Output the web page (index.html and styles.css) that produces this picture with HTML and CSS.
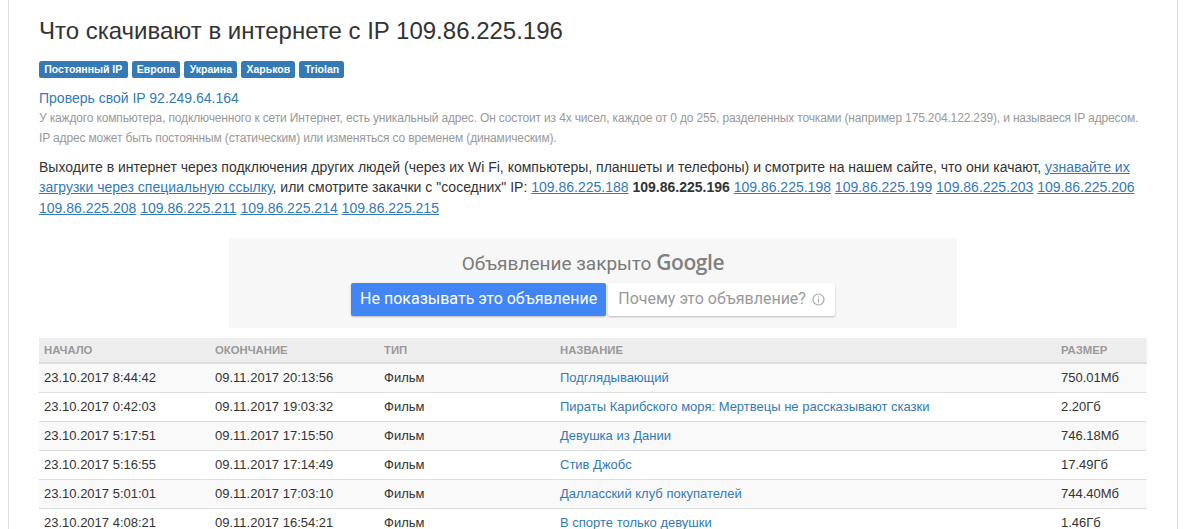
FILE: index.html
```html
<!DOCTYPE html>
<html lang="ru">
<head>
<meta charset="utf-8">
<title>Что скачивают в интернете с IP 109.86.225.196</title>
<link rel="stylesheet" href="styles.css">
</head>
<body>
<div class="page">
  <h1 class="title">Что скачивают в интернете с IP 109.86.225.196</h1>
  <div class="labels">
    <span class="label">Постоянный IP</span>
    <span class="label">Европа</span>
    <span class="label">Украина</span>
    <span class="label">Харьков</span>
    <span class="label">Triolan</span>
  </div>
  <a class="check" href="#">Проверь свой IP 92.249.64.164</a>
  <p class="note">У каждого компьютера, подключенного к сети Интернет, есть уникальный адрес. Он состоит из 4х чисел, каждое от 0 до 255, разделенных точками (например 175.204.122.239), и называеся IP адресом. IP адрес может быть постоянным (статическим) или изменяться со временем (динамическим).</p>
  <p class="lead">Выходите в интернет через подключения других людей (через их Wi Fi, компьютеры, планшеты и телефоны) и смотрите на нашем сайте, что они качают, <a href="#">узнавайте их загрузки через специальную ссылку</a>, или смотрите закачки с "соседних" IP: <a href="#">109.86.225.188</a> <b>109.86.225.196</b> <a href="#">109.86.225.198</a> <a href="#">109.86.225.199</a> <a href="#">109.86.225.203</a> <a href="#">109.86.225.206</a> <a href="#">109.86.225.208</a> <a href="#">109.86.225.211</a> <a href="#">109.86.225.214</a> <a href="#">109.86.225.215</a></p>
  <div class="ad">
    <div class="ad-title">Объявление закрыто <span class="g">Google</span></div>
    <div class="ad-buttons">
      <span class="btn-blue">Не показывать это объявление</span>
      <span class="btn-white">Почему это объявление? <svg class="info" width="13" height="13" viewBox="0 0 13 13"><circle cx="6.5" cy="6.5" r="5.5" fill="none" stroke="#aaa" stroke-width="1.2"/><rect x="5.9" y="5.5" width="1.2" height="4" fill="#aaa"/><rect x="5.9" y="3.3" width="1.2" height="1.2" fill="#aaa"/></svg></span>
    </div>
  </div>
  <table class="downloads">
    <thead>
      <tr><th class="c1">Начало</th><th class="c2">Окончание</th><th class="c3">Тип</th><th class="c4">Название</th><th class="c5">Размер</th></tr>
    </thead>
    <tbody>
      <tr><td>23.10.2017 8:44:42</td><td>09.11.2017 20:13:56</td><td>Фильм</td><td><a href="#">Подглядывающий</a></td><td>750.01Мб</td></tr>
      <tr><td>23.10.2017 0:42:03</td><td>09.11.2017 19:03:32</td><td>Фильм</td><td><a href="#">Пираты Карибского моря: Мертвецы не рассказывают сказки</a></td><td>2.20Гб</td></tr>
      <tr><td>23.10.2017 5:17:51</td><td>09.11.2017 17:15:50</td><td>Фильм</td><td><a href="#">Девушка из Дании</a></td><td>746.18Мб</td></tr>
      <tr><td>23.10.2017 5:16:55</td><td>09.11.2017 17:14:49</td><td>Фильм</td><td><a href="#">Стив Джобс</a></td><td>17.49Гб</td></tr>
      <tr><td>23.10.2017 5:01:01</td><td>09.11.2017 17:03:10</td><td>Фильм</td><td><a href="#">Далласский клуб покупателей</a></td><td>744.40Мб</td></tr>
      <tr><td>23.10.2017 4:08:21</td><td>09.11.2017 16:54:21</td><td>Фильм</td><td><a href="#">В спорте только девушки</a></td><td>1.46Гб</td></tr>
    </tbody>
  </table>
</div>
</body>
</html>
```
FILE: styles.css
```css
html, body {
  margin: 0;
  padding: 0;
  background: #fff;
}
body {
  font-family: "Liberation Sans", Arial, sans-serif;
  font-size: 14px;
  line-height: 1.42857;
  color: #333;
}
a { color: #337ab7; }
.page {
  margin-left: 8px;
  width: 1108px;
  min-height: 600px;
  padding: 18px 30px 0 30px;
  border-left: 1px solid #ddd;
  border-right: 1px solid #ddd;
}
.title {
  margin: 0 0 17px;
  font-size: 24px;
  font-weight: 400;
  line-height: 1.1;
  color: #333;
}
.labels {
  display: flex;
  gap: 4px;
  margin-bottom: 10px;
}
.label {
  display: inline-block;
  padding: 0.25em 0.5em 0.3em;
  font-size: 10.5px;
  font-weight: 700;
  line-height: 1;
  color: #fff;
  background: #337ab7;
  border-radius: 0.25em;
}
.check {
  display: block;
  text-decoration: none;
  font-size: 14px;
  line-height: 20px;
}
.note {
  margin: 0 0 9px;
  font-size: 12px;
  line-height: 20px;
  letter-spacing: -0.15px;
  color: #999;
}
.lead {
  margin: 0 0 20px;
  font-size: 14px;
  line-height: 20.5px;
}
.lead a { text-decoration: underline; }
.ad {
  width: 728px;
  height: 90px;
  margin: 0 auto 10px;
  background: #f7f7f7;
  display: flex;
  flex-direction: column;
  align-items: center;
  font-family: Roboto, "Liberation Sans", Arial, sans-serif;
}
.ad-title {
  margin-top: 12px;
  font-size: 19px;
  line-height: 24px;
  color: #7a7a7a;
}
.ad-title .g {
  font-family: "Open Sans", Roboto, sans-serif;
  font-weight: 600;
  color: #808080;
  font-size: 21px;
  letter-spacing: -0.4px;
}
.ad-buttons {
  display: flex;
  gap: 2px;
  margin-top: 7px;
}
.btn-blue {
  display: flex;
  align-items: center;
  height: 33px;
  padding: 0 9px;
  background: #4285f4;
  color: #fff;
  font-size: 16px;
  border-radius: 2px;
  box-shadow: 0 1px 2px rgba(0,0,0,0.25);
}
.btn-white {
  display: flex;
  align-items: center;
  gap: 6px;
  height: 33px;
  padding: 0 10px;
  background: #fff;
  color: #999;
  font-size: 16px;
  border-radius: 2px;
  box-shadow: 0 1px 2px rgba(0,0,0,0.25);
}
.downloads {
  width: 100%;
  border-collapse: collapse;
  font-size: 13px;
}
.downloads th {
  background: #eee;
  color: #999;
  font-size: 11.3px;
  font-weight: 700;
  text-transform: uppercase;
  text-align: left;
  height: 24px;
  padding: 0 5px;
  border-bottom: 2px solid #ddd;
}
.downloads td {
  height: 28px;
  padding: 0 5px;
  border-top: 1px solid #ddd;
  vertical-align: middle;
}
.downloads tbody tr:nth-child(odd) td { background: #f9f9f9; }
.downloads td a { text-decoration: none; }
.c1 { width: 161px; }
.c2 { width: 159px; }
.c3 { width: 166px; }
.c4 { width: 491px; }
```
